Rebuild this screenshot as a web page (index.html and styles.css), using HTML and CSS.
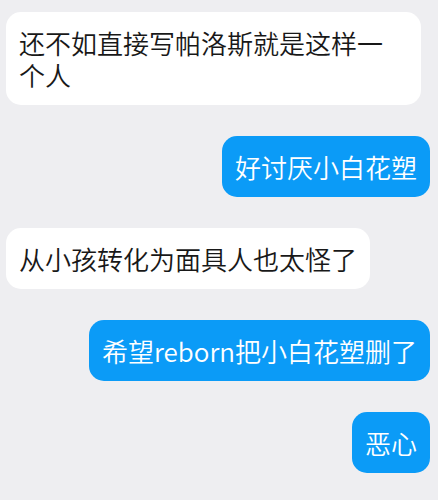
FILE: index.html
```html
<!DOCTYPE html>
<html lang="zh-CN">
<head>
<meta charset="utf-8">
<link rel="stylesheet" href="styles.css">
</head>
<body>
<div class="chat">
  <div class="row left"><div class="bubble in">还不如直接写帕洛斯就是这样一个人</div></div>
  <div class="row right"><div class="bubble out">好讨厌小白花塑</div></div>
  <div class="row left"><div class="bubble in">从小孩转化为面具人也太怪了</div></div>
  <div class="row right"><div class="bubble out">希望reborn把小白花塑删了</div></div>
  <div class="row right"><div class="bubble out">恶心</div></div>
</div>
</body>
</html>
```
FILE: styles.css
```css
html, body {
  margin: 0;
  padding: 0;
  background: #eeeef1;
}
body {
  width: 438px;
  height: 500px;
  overflow: hidden;
  font-family: "Noto Sans CJK SC", "Noto Sans", sans-serif;
}
.chat {
  display: flex;
  flex-direction: column;
  gap: 31px;
  padding: 12px 8px 0 6px;
}
.row {
  display: flex;
}
.row.left { justify-content: flex-start; }
.row.right { justify-content: flex-end; }
.bubble {
  box-sizing: border-box;
  max-width: 415px;
  padding: 14.5px 13px;
  font-size: 26px;
  font-weight: 350;
  line-height: 32px;
  border-radius: 15px;
}
.bubble.in {
  background: #ffffff;
  color: #181818;
}
.bubble.out {
  background: #0b9bf7;
  color: #ffffff;
}
```
